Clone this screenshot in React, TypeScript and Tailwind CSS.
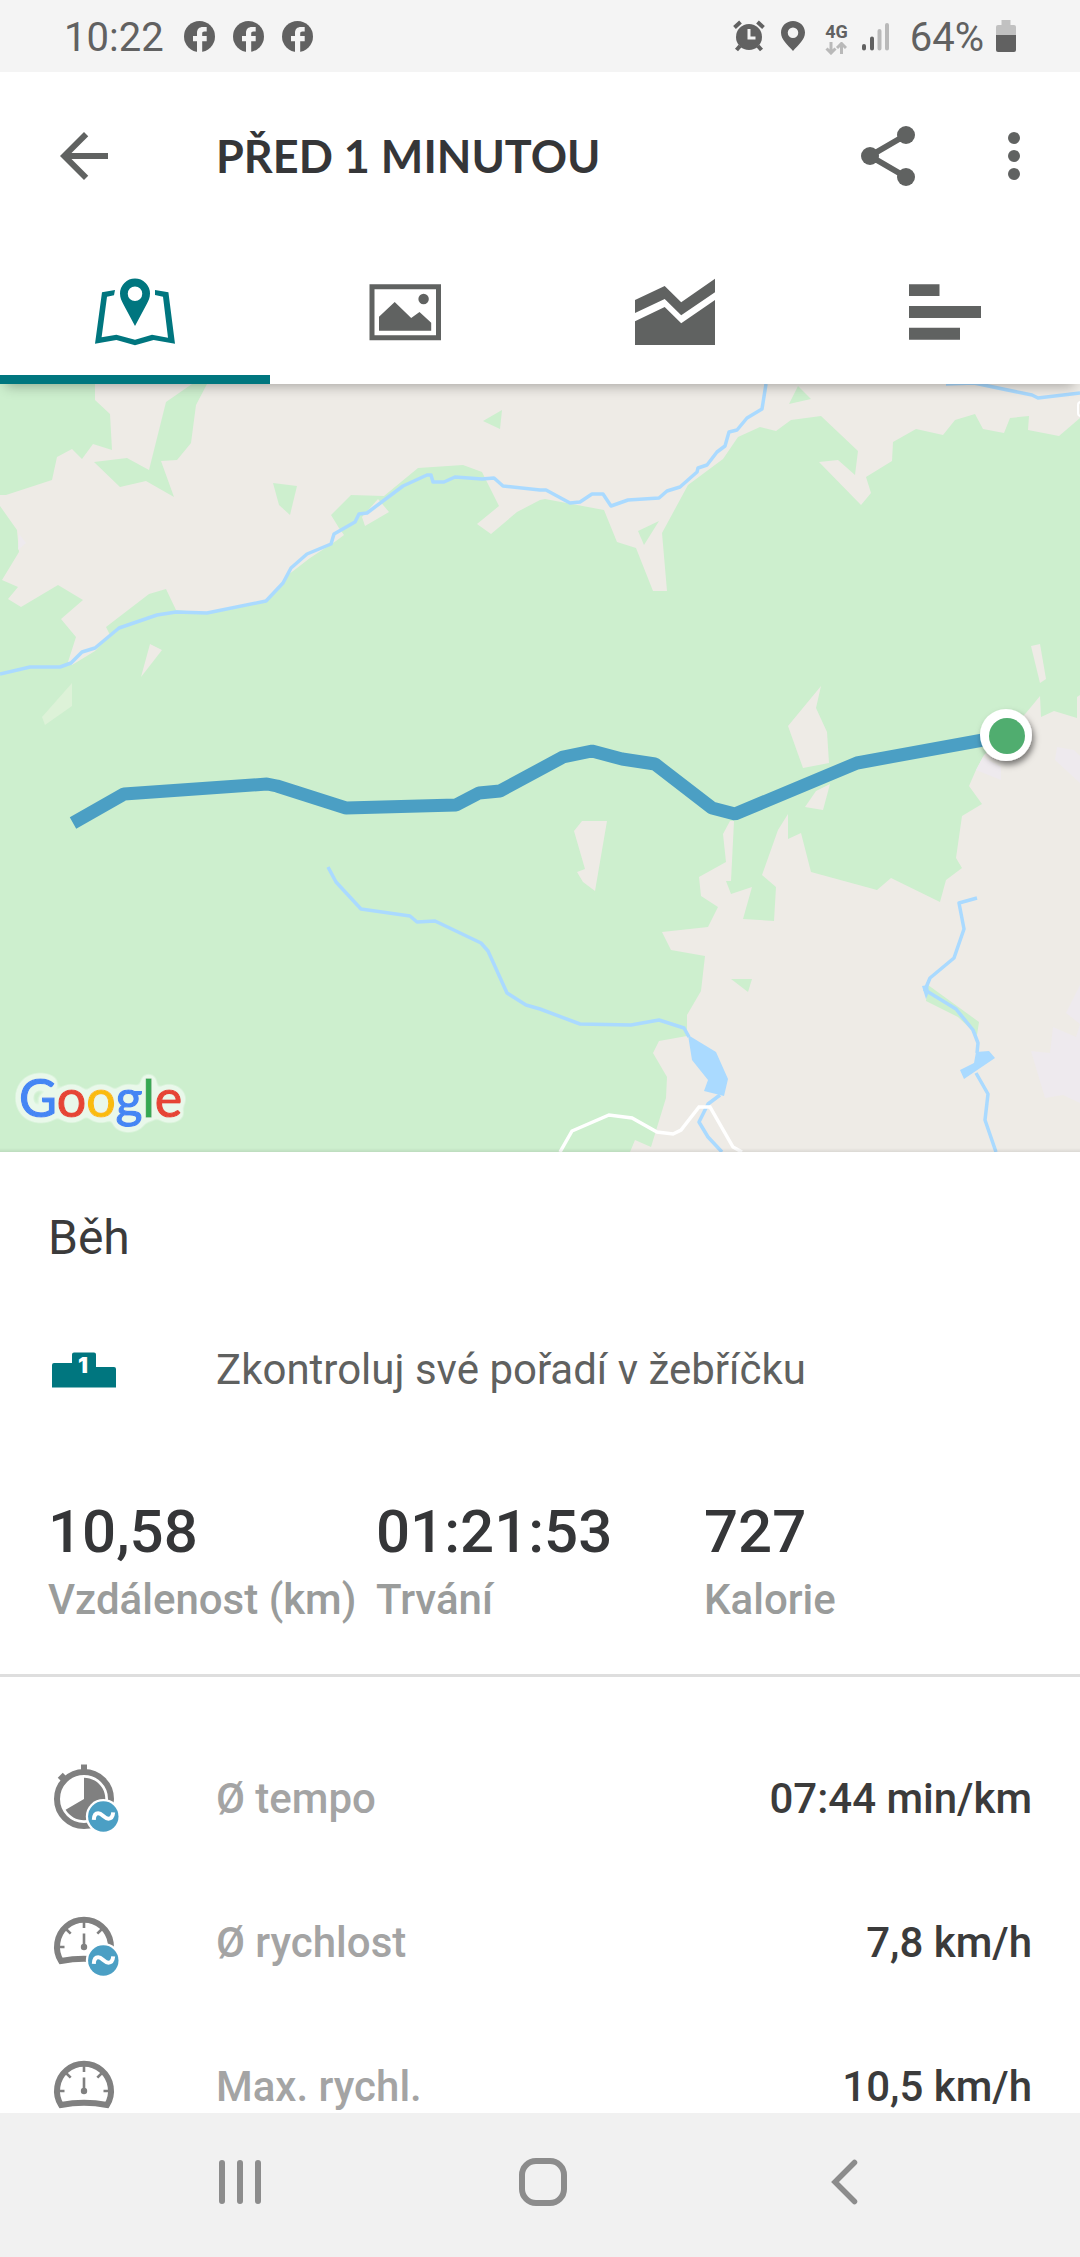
import { useState } from "react";
import type { ReactNode } from "react";

const LAND = "#eeebe6";
const FOREST = "#cdefce";
const WATER = "#aadaff";
const TRACK = "#4b9fc4";

/* --- STATUS BAR ICONS --- */

function FacebookIcon() {
  return (
    <svg viewBox="0 0 31 31" className="size-[31px]" aria-hidden="true">
      <circle cx="15.5" cy="15.5" r="15.5" fill="#616161" />
      <path
        d="M13 31V20.3H9V15h4v-3c0-4 2.2-6 6-6h3.7v4.5h-2.3c-1.6 0-2.2.8-2.2 2.2V15h4.5v5.3h-4.5V31z"
        fill="#f4f4f4"
      />
    </svg>
  );
}

function AlarmIcon() {
  return (
    <svg viewBox="0 0 32 32" className="size-8" fill="none" stroke="#616161" aria-hidden="true">
      <circle cx="16" cy="17" r="13" fill="#616161" stroke="none" />
      <path d="M1.5 7.5l6-5.5M30.5 7.5l-6-5.5M7 26l-3.5 4M25 26l3.5 4" strokeWidth="4" />
      <path d="M16 9v9h6.5" stroke="#f4f4f4" strokeWidth="3" />
    </svg>
  );
}

function PlaceIcon() {
  return (
    <svg viewBox="0 0 24 32" className="h-8 w-6" aria-hidden="true">
      <path
        d="M12 1C5.4 1 0 6 0 12.5 0 20 7 25 12 31c5-6 12-11 12-18.5C24 6 18.6 1 12 1zm0 6.5a5 5 0 1 1 0 10.5 5 5 0 0 1 0-10.5z"
        fill="#616161"
        fillRule="evenodd"
      />
    </svg>
  );
}

function SignalIcon() {
  return (
    <svg viewBox="0 0 28 30" className="h-[30px] w-7" strokeWidth="4" strokeLinecap="round" aria-hidden="true">
      <path d="M2 25v2.5M10 17.5v10" stroke="#616161" />
      <path d="M17.5 10v17.5M25 4v23.5" stroke="#b9b9b9" />
    </svg>
  );
}

function DataIcon() {
  return (
    <svg viewBox="0 0 22 13" className="h-[13px] w-[22px]" fill="none" stroke="#b9b9b9" strokeWidth="3" aria-hidden="true">
      <path d="M6 0v10M1.5 6.5L6 11l4.5-4.5M16.5 12V2M12 6l4.5-4.5L21 6" />
    </svg>
  );
}

function BatteryIcon() {
  return (
    <svg viewBox="0 0 20 32" className="h-8 w-5" aria-hidden="true">
      <path d="M5.5 0h9v5H18a2 2 0 0 1 2 2v8H0V7a2 2 0 0 1 2-2h3.5z" fill="#c1c1c1" />
      <path d="M0 15h20v15a2 2 0 0 1-2 2H2a2 2 0 0 1-2-2z" fill="#616161" />
    </svg>
  );
}

function StatusBar() {
  return (
    <div className="flex h-[72px] shrink-0 items-center justify-between bg-[#f4f4f4] px-16 pt-1 text-[40px] leading-[48px] text-[#616161]">
      <div className="flex items-center gap-5">
        <span>10:22</span>
        <div className="flex gap-[18px] pb-1">
          <FacebookIcon />
          <FacebookIcon />
          <FacebookIcon />
        </div>
      </div>
      <div className="flex items-center gap-5">
        <div className="flex gap-4 pb-1">
          <AlarmIcon />
          <PlaceIcon />
        </div>
        <div className="flex items-center gap-[14px]">
          <div className="flex flex-col items-center">
            <span className="text-[18px] leading-5 font-bold">4G</span>
            <DataIcon />
          </div>
          <div className="pb-1">
            <SignalIcon />
          </div>
        </div>
        <div className="flex items-center gap-3">
          <span>64%</span>
          <div className="pb-1">
            <BatteryIcon />
          </div>
        </div>
      </div>
    </div>
  );
}

/* --- APP BAR --- */

function AppBar() {
  return (
    <div className="flex h-[168px] items-center pr-[30px] pl-12 text-[#606261]">
      <button type="button" aria-label="Zpět" className="size-[72px]">
        <svg viewBox="0 0 24 24" fill="currentColor">
          <path d="M20 11H7.83l5.59-5.59L12 4l-8 8 8 8 1.41-1.41L7.83 13H20v-2z" />
        </svg>
      </button>
      <h1 className="ml-24 flex-1 font-[Lato,sans-serif] text-[45px] leading-[56px] font-bold text-[#353638]">
        PŘED 1 MINUTOU
      </h1>
      <div className="flex gap-[54px]">
        <button type="button" aria-label="Sdílet" className="size-[72px]">
          <svg viewBox="0 0 24 24" fill="currentColor">
            <path d="M18 5L6 12l12 7" fill="none" stroke="currentColor" strokeWidth="2" />
            <circle cx="18" cy="5" r="3" />
            <circle cx="6" cy="12" r="3" />
            <circle cx="18" cy="19" r="3" />
          </svg>
        </button>
        <button type="button" aria-label="Další možnosti" className="size-[72px]">
          <svg viewBox="0 0 24 24" fill="currentColor">
            <circle cx="12" cy="6" r="2" />
            <circle cx="12" cy="12" r="2" />
            <circle cx="12" cy="18" r="2" />
          </svg>
        </button>
      </div>
    </div>
  );
}

/* --- TABS --- */

const TABS: { id: string; label: string; icon: ReactNode }[] = [
  {
    id: "map",
    label: "Mapa",
    icon: (
      <>
        <path
          d="M48 14.5a15 15 0 0 0-15 15c0 4 1.5 7.5 3.5 11L48 62l11.5-21.5c2-3.5 3.5-7 3.5-11a15 15 0 0 0-15-15zm0 8a7 7 0 1 1 0 14.5 7 7 0 0 1 0-14.5z"
          fillRule="evenodd"
        />
        <path d="M28 26l-13 2.3L8 79.7 29.4 76 48 81.3 66.6 76 88 79.7 81.4 28.3 68 26v5l8 1.7 5 41-16-3-17 5-18.6-5-14.8 2.6L20 32.7l7-1.5z" />
      </>
    ),
  },
  {
    id: "photos",
    label: "Fotky",
    icon: (
      <>
        <path d="M12.5 20.3h71.5v56H12.5zM17.5 25.3v46h61.5v-46z" fillRule="evenodd" />
        <circle cx="66.6" cy="35" r="5.2" />
        <path d="M22 52.7L37.7 38l16.5 16 8.3-6 11.7 10.7v8H22z" />
      </>
    ),
  },
  {
    id: "charts",
    label: "Grafy",
    icon: (
      <>
        <path d="M8 36l29.7-14 16.5 16.3L88 14.7v13.6l-33.8 23L37.7 35 8 49z" />
        <path d="M8 57.3L37.7 43l16.5 16.3L88 36v45H8z" />
      </>
    ),
  },
  {
    id: "splits",
    label: "Mezičasy",
    icon: <path d="M12 20.3h30.5V32H12zM12 42h72v12H12zM12 63.7h51v12H12z" />,
  },
];

function Tabs() {
  const [active, setActive] = useState("map");

  return (
    <div role="tablist" className="grid h-36 grid-cols-4">
      {TABS.map((tab) => (
        <button
          key={tab.id}
          type="button"
          role="tab"
          aria-label={tab.label}
          aria-selected={active === tab.id}
          onClick={() => setActive(tab.id)}
          className={`flex items-center justify-center border-y-[9px] border-t-transparent ${
            active === tab.id ? "border-b-[#00767f] text-[#00767f]" : "border-b-transparent text-[#606261]"
          }`}
        >
          <svg viewBox="0 0 96 96" className="size-24" fill="currentColor">
            {tab.icon}
          </svg>
        </button>
      ))}
    </div>
  );
}

/* --- MAP --- */

function RouteMap() {
  return (
    <div className="relative">
      <svg viewBox="0 0 1080 768" className="block h-auto w-full" role="img" aria-label="Mapa trasy">
        <defs>
          <filter id="halo" x="-20%" y="-30%" width="140%" height="160%">
            <feGaussianBlur in="SourceAlpha" stdDeviation="4" />
            <feComponentTransfer result="spread">
              <feFuncA type="linear" slope="16" intercept="-0.9" />
            </feComponentTransfer>
            <feFlood floodColor="#e9f8ea" />
            <feComposite in2="spread" operator="in" />
            <feMerge>
              <feMergeNode />
              <feMergeNode in="SourceGraphic" />
            </feMerge>
          </filter>
          <filter id="pinShadow" x="-30%" y="-30%" width="170%" height="170%">
            <feDropShadow dx="2" dy="4" stdDeviation="3" floodColor="#000" floodOpacity="0.5" />
          </filter>
        </defs>

        <rect width="1080" height="768" fill={FOREST} />

        {/* open land */}
        <g fill={LAND}>
          <path d="M95 0V16L110 30 112 66 93 60 82 75 72 65 57 73 52 96 6 111H0V122L17 146 19 168 2 196 18 203 8 215 21 223 58 201 83 216 61 235 76 253 68 278 72 281 95 267 110 251 106 243 149 210 166 205 176 226 207 229 265 217 283 199 288 191 310 174 336 157 344 151 339 144 331 131 351 111 384 112 418 84 463 81 482 88 499 122 477 140 491 150 517 128 540 116 545 115 604 126 617 158 636 164 653 207H667L662 149 688 101 723 75 738 53 760 43 776 47 791 36 821 32 858 67 855 91 838 76 819 78 861 121 871 109 866 93 892 77 893 58 916 45 943 51 955 36 975 30 983 45 1004 49 1010 34 1029 32 1028 46 1059 52 1080 34V0z" />
          <path d="M1040 312L1041 333 1054 327 1077 334V313L1080 311V768H630L635 756 651 763 666 714 667 693 653 669 659 657 687 652V631L701 607 705 572 671 566 662 548 708 543 718 523 701 512 699 493 726 478 723 450 730 437H734L731 497H726L731 510 752 503 743 535 774 537 776 503 762 491 778 446 788 430V455L801 449 811 488 877 506 891 494 940 518 946 496 962 484 956 474 962 432 982 420 969 402 976 386 984 371 1026 329z" />
          <path d="M362 133L378 115 389 128 365 142z" />
          <path d="M150 260L162 266 141 293z" />
          <path d="M1031 262L1040 260 1046 295 1040 299z" />
          <path d="M821 302L816 324 827 348 829 379 803 384 788 342z" />
          <path d="M582 437H607L595 507 583 498 577 488 585 485 574 447z" />
          <path d="M830 400L823 426 805 423 816 407z" />
        </g>
        <path d="M72 299V322L45 341 42 333z" fill="#ddf2d8" />

        {/* woods inside the open land */}
        <g fill={FOREST}>
          <path d="M207 0L196 21 191 59 177 76 161 77 174 113 146 97 120 103 94 78 127 74 149 86 166 18 192 0z" />
          <path d="M273 99L297 102 290 131 279 121z" />
          <path d="M483 37L502 26 500 45z" />
          <path d="M798 2L811 15 789 20z" />
          <path d="M638 147L659 137 644 161z" />
          <path d="M731 595H752L748 608z" />
          <path d="M928 601L979 638 977 651 958 633 926 617z" />
        </g>

        {/* built-up areas */}
        <g fill="#eeeaee">
          <path d="M19 150L26 159 18 166z" />
          <path d="M983 373L1001 383V396L976 386z" />
          <path d="M1057 363L1074 366 1080 372V399L1055 376z" />
          <path d="M1080 601L1066 629 1080 640V719L1063 711 1045 714 1031 667 1050 669 1053 643 1076 653 1080 640z" />
        </g>

        {/* water */}
        <g fill="none" stroke={WATER} strokeWidth="3.5" strokeLinejoin="round">
          <path d="M0 290L30 283H60L71 279 82 268 95 264 119 244 157 231 176 228 207 229 266 217 283 199 291 184 307 170 331 160 334 150 355 138 359 130 367 129 403 102 427 91H431L433 98H444L455 93 482 95 494 94 503 102 540 106H546L570 119 580 118 592 110H603L611 122 628 116 659 114 667 107 680 103 697 88 698 84 707 81 717 68 725 62 729 48 737 46 747 34 762 25 766 0" />
          <path d="M946 0L974 -1 1032 11 1038 14 1080 9" />
          <path d="M328 483L336 498 361 525 410 532 417 538 435 537 481 559 488 567 507 609 526 621 540 625 580 640 631 641 659 636 684 644 689 653" />
          <path d="M720 711L708 720 699 738 708 753 722 768" />
          <path d="M977 514L959 519 964 545 954 574 930 594 925 606 956 625 973 646 978 659 977 669" />
          <path d="M976 689L988 710 985 736 996 768" />
        </g>
        <g fill={WATER}>
          <path d="M688 651L716 668 728 695 724 712 704 707 708 696 692 676z" />
          <path d="M976 668L989 667 995 674 964 695 960 686 974 679z" />
          <path d="M922 602L928 601 929 608 926 615z" />
        </g>

        {/* roads */}
        <path
          d="M560 768L572 747 609 731 632 734 657 748 673 750 681 746 699 723H710L733 763 742 768"
          fill="none"
          stroke="#fff"
          strokeWidth="3.5"
        />
        <rect x="1078" y="18" width="16" height="14" rx="3" fill="none" stroke="#fff" strokeWidth="2" />

        {/* recorded track */}
        <path
          d="M73 439L124 410 267 400 277 402 346 424 456 421 479 409 500 407 563 373 592 367 622 375 655 380 712 424 735 430 857 379 1005 352"
          fill="none"
          stroke={TRACK}
          strokeWidth="13"
          strokeLinejoin="bevel"
        />
        <circle cx="1006" cy="351" r="26" fill="#fff" filter="url(#pinShadow)" />
        <circle cx="1007" cy="352" r="18" fill="#50ad6f" />

        <text x="19" y="733" fontFamily="Lato, sans-serif" fontSize="52" strokeWidth="1.2" filter="url(#halo)">
          <tspan fill="#4486f4" stroke="#4486f4">G</tspan>
          <tspan fill="#e64434" stroke="#e64434">o</tspan>
          <tspan fill="#fabc0c" stroke="#fabc0c">o</tspan>
          <tspan fill="#4486f4" stroke="#4486f4">g</tspan>
          <tspan fill="#35a853" stroke="#35a853">l</tspan>
          <tspan fill="#e64434" stroke="#e64434">e</tspan>
        </text>
      </svg>
      <div className="absolute inset-x-0 bottom-0 h-1 bg-linear-to-t from-black/8 to-transparent" />
    </div>
  );
}

/* --- METRIC ICONS --- */

function AverageBadge() {
  return (
    <>
      <circle cx="55.3" cy="53.5" r="17.5" fill="#fff" />
      <circle cx="55.3" cy="53.5" r="15.2" fill={TRACK} />
      <path
        d="M45.8 56.8c.2-4.6 1.7-6.5 4.4-6.5 4 0 6.2 5.4 10.3 5.4 3 0 4.3-2.2 4.7-6.3"
        fill="none"
        stroke="#fff"
        strokeWidth="4"
      />
    </>
  );
}

function PaceIcon() {
  return (
    <svg viewBox="0 0 72 72" className="size-[72px]" aria-hidden="true">
      <circle cx="36" cy="36" r="27" fill="none" stroke="#808080" strokeWidth="6" />
      <path d="M33 1.5h6V8h-6z" fill="#808080" />
      <path d="M11.5 16.5l5-5" stroke="#808080" strokeWidth="5" />
      <path d="M36 36V14.7A21.3 21.3 0 1 1 17.6 46.7z" fill="#808080" />
      <AverageBadge />
    </svg>
  );
}

function SpeedIcon({ average }: { average?: boolean }) {
  return (
    <svg viewBox="0 0 72 72" className="size-[72px]" fill="none" stroke="#808080" aria-hidden="true">
      <path d="M13 54A27 27 0 1 1 59 54Q36 49.5 13 54z" strokeWidth="6" />
      <path d="M36 15v6M11 40h5.5M55.5 40H61M18 22l4.7 4.7M54 22l-4.7 4.7M36 26.5V40" strokeWidth="2.6" />
      <circle cx="36" cy="40" r="3.2" fill="#808080" stroke="none" />
      {average && (
        <g stroke="none">
          <AverageBadge />
        </g>
      )}
    </svg>
  );
}

function PodiumIcon() {
  return (
    <svg viewBox="0 0 72 36" className="h-9 w-[72px]" aria-hidden="true">
      <path
        d="M4 35.5V13a2 2 0 0 1 2-2h18V2.5a2 2 0 0 1 2-2h20a2 2 0 0 1 2 2V15h18a2 2 0 0 1 2 2v18.500z"
        fill="#00767f"
      />
      <text x="35" y="21" textAnchor="middle" fontFamily="Inter, sans-serif" fontSize="22" fontWeight="900" fill="#fff">
        1
      </text>
    </svg>
  );
}

/* --- DETAILS --- */

const STATS = [
  { label: "Vzdálenost (km)", value: "10,58" },
  { label: "Trvání", value: "01:21:53" },
  { label: "Kalorie", value: "727" },
];

const METRICS = [
  { label: "Ø tempo", value: "07:44 min/km", icon: <PaceIcon /> },
  { label: "Ø rychlost", value: "7,8 km/h", icon: <SpeedIcon average /> },
  { label: "Max. rychl.", value: "10,5 km/h", icon: <SpeedIcon /> },
];

function Details() {
  return (
    <>
      <section className="border-b-[3px] border-[#dedede] px-12 pt-[58px] pb-[46px]">
        <h2 className="text-[48px] leading-[56px] text-[#3b3b3b]">Běh</h2>
        <button
          type="button"
          className="mt-[68px] flex h-[72px] w-full items-center gap-24 text-left text-[42px] leading-[56px] text-[#5f6160]"
        >
          <PodiumIcon />
          Zkontroluj své pořadí v žebříčku
        </button>
        <dl className="mt-[90px] grid grid-cols-3">
          {STATS.map((stat) => (
            <div key={stat.label} className="flex flex-col-reverse gap-1 whitespace-nowrap">
              <dt className="text-[42px] leading-[56px] font-medium text-[#9a9c9b]">{stat.label}</dt>
              <dd className="text-[60px] leading-[72px] font-medium text-[#353638]">{stat.value}</dd>
            </div>
          ))}
        </dl>
      </section>

      <dl className="px-12 pt-[50px]">
        {METRICS.map((metric) => (
          <div key={metric.label} className="flex h-36 items-center text-[42px] leading-[56px] font-medium">
            {metric.icon}
            <dt className="ml-24 flex-1 text-[#a4a4a4]">{metric.label}</dt>
            <dd className="text-[#3b3b3b]">{metric.value}</dd>
          </div>
        ))}
      </dl>
    </>
  );
}

/* --- SYSTEM NAVIGATION --- */

function NavBar() {
  return (
    <nav className="flex h-36 shrink-0 items-center justify-between bg-[#f1f1f1] pr-[199px] pb-[6px] pl-[204px]">
      <button type="button" aria-label="Poslední aplikace" className="size-[72px]">
        <svg viewBox="0 0 72 72" fill="none" stroke="#8c8c8c" strokeWidth="6" strokeLinecap="round">
          <path d="M18 17v38M36 17v38M54 17v38" />
        </svg>
      </button>
      <button type="button" aria-label="Domů" className="size-[72px]">
        <svg viewBox="0 0 72 72" fill="none" stroke="#8c8c8c" strokeWidth="6">
          <rect x="15" y="15" width="42" height="42" rx="14" />
        </svg>
      </button>
      <button type="button" aria-label="Zpět v systému" className="size-[72px]">
        <svg viewBox="0 0 72 72" fill="none" stroke="#8c8c8c" strokeWidth="5.5" strokeLinecap="round">
          <path d="M45.5 16.5L26 36l19.5 19.5" />
        </svg>
      </button>
    </nav>
  );
}

export default function App() {
  return (
    <div className="flex h-screen flex-col overflow-hidden bg-white font-[Roboto,sans-serif]">
      <StatusBar />
      <header className="relative z-10 shrink-0 bg-white shadow-[0_8px_12px_-6px_rgba(0,0,0,0.3)]">
        <AppBar />
        <Tabs />
      </header>
      <main className="min-h-0 flex-1 overflow-y-auto [scrollbar-width:none]">
        <RouteMap />
        <Details />
      </main>
      <NavBar />
    </div>
  );
}
